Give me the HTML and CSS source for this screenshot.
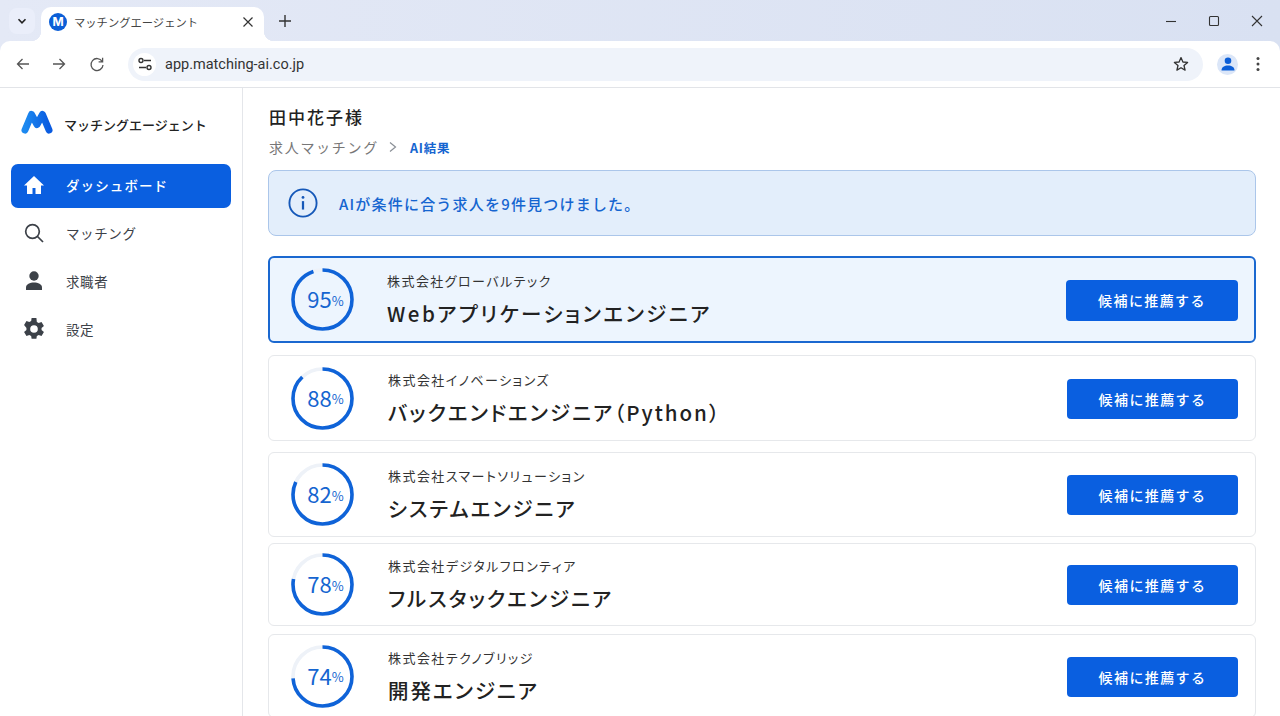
FILE: index.html
```html
<!DOCTYPE html>
<html lang="ja">
<head>
    <meta charset="UTF-8">
    <title>マッチングエージェント</title>
    <link rel="stylesheet" href="styles.css">
</head>
<body>
    <div class="window">
        <div class="tabstrip">
            <div class="tab-menu">
                <svg width="12" height="12" viewBox="0 0 12 12"><path d="M2.5 4.2 6 7.8l3.5-3.6" fill="none" stroke="#222" stroke-width="1.6"/></svg>
            </div>
            <div class="tab">
                <span class="favicon">M</span>
                <span class="tab-title">マッチングエージェント</span>
                <svg class="tab-close" width="12" height="12" viewBox="0 0 12 12"><path d="M1.5 1.5l9 9M10.5 1.5l-9 9" stroke="#333" stroke-width="1.2"/></svg>
            </div>
            <svg class="new-tab" width="14" height="14" viewBox="0 0 14 14"><path d="M7 1v12M1 7h12" stroke="#333" stroke-width="1.4"/></svg>
            <div class="win-controls">
                <svg width="12" height="12" viewBox="0 0 12 12"><path d="M1 6.5h10" stroke="#333" stroke-width="1.1"/></svg>
                <svg width="12" height="12" viewBox="0 0 12 12"><rect x="1.5" y="1.5" width="9" height="9" rx="1" fill="none" stroke="#333" stroke-width="1.1"/></svg>
                <svg width="12" height="12" viewBox="0 0 12 12"><path d="M1 1l10 10M11 1L1 11" stroke="#333" stroke-width="1.1"/></svg>
            </div>
        </div>

        <div class="toolbar">
            <svg class="tool-icon" width="16" height="16" viewBox="0 0 16 16"><path d="M14 8H2.500M7.500 3 2.500 8l5 5" fill="none" stroke="#555" stroke-width="1.300"/></svg>
            <svg class="tool-icon" width="16" height="16" viewBox="0 0 16 16"><path d="M2 8h11.500M8.500 3l5 5-5 5" fill="none" stroke="#555" stroke-width="1.300"/></svg>
            <svg class="tool-icon" width="16" height="16" viewBox="0 0 16 16"><path d="M13.200 5.500A6 6 0 1 0 14 9M13.600 1.800v4h-4" fill="none" stroke="#555" stroke-width="1.300"/></svg>
            <div class="omnibox">
                <span class="site-info">
                    <svg width="16" height="16" viewBox="0 0 16 16"><path d="M7 4.500h7M2 11.500h7" stroke="#333" stroke-width="1.400"/><circle cx="4" cy="4.500" r="2" fill="none" stroke="#333" stroke-width="1.400"/><circle cx="12" cy="11.500" r="2" fill="none" stroke="#333" stroke-width="1.400"/></svg>
                </span>
                <span class="url">app.matching-ai.co.jp</span>
                <svg class="star" width="16" height="16" viewBox="0 0 16 16"><path d="M8 1.600 9.900 6l4.700.4-3.600 3.100 1.100 4.600L8 11.700l-4.100 2.400 1.100-4.600L1.400 6.400 6.100 6z" fill="none" stroke="#333" stroke-width="1.300" stroke-linejoin="round"/></svg>
            </div>
            <span class="avatar">
                <svg width="16" height="16" viewBox="0 0 16 16"><circle cx="8" cy="4.800" r="3.300" fill="#0b5ed7"/><path d="M1.500 14.500c0-3.600 3-5 6.500-5s6.500 1.400 6.500 5z" fill="#0b5ed7"/></svg>
            </span>
            <svg class="kebab" width="4" height="16" viewBox="0 0 4 16"><circle cx="2" cy="2.500" r="1.500" fill="#444"/><circle cx="2" cy="8" r="1.500" fill="#444"/><circle cx="2" cy="13.500" r="1.500" fill="#444"/></svg>
        </div>

        <div class="app">
            <aside class="sidebar">
                <div class="brand">
                    <svg width="32" height="24" viewBox="0 0 32 24">
                        <defs>
                            <linearGradient id="logo" x1="0" y1="0" x2="1" y2="0">
                                <stop offset="0" stop-color="#1d8af0"/>
                                <stop offset="1" stop-color="#0a5be0"/>
                            </linearGradient>
                        </defs>
                        <path d="M4 20 10.500 4.500 16 14.500 21.500 4.500 28 20" fill="none" stroke="url(#logo)" stroke-width="7" stroke-linecap="round" stroke-linejoin="round"/>
                    </svg>
                    <span class="brand-name">マッチングエージェント</span>
                </div>
                <nav class="nav">
                    <a class="nav-item active">
                        <svg width="24" height="24" viewBox="0 0 24 24"><path d="M12 3 2 12.500h3V21h5.500v-6h3v6H19v-8.500h3z" fill="#fff"/></svg>
                        <span>ダッシュボード</span>
                    </a>
                    <a class="nav-item">
                        <svg width="24" height="24" viewBox="0 0 24 24"><circle cx="10.500" cy="10.500" r="6.800" fill="none" stroke="#3c4148" stroke-width="1.700"/><path d="M15.500 15.500 21 21" stroke="#3c4148" stroke-width="1.700"/></svg>
                        <span>マッチング</span>
                    </a>
                    <a class="nav-item">
                        <svg width="24" height="24" viewBox="0 0 24 24"><circle cx="12" cy="7" r="4.700" fill="#3c4148"/><path d="M4 21v-2.500C4 15 8 13.500 12 13.500s8 1.500 8 5V21z" fill="#3c4148"/></svg>
                        <span>求職者</span>
                    </a>
                    <a class="nav-item">
                        <svg width="24" height="24" viewBox="1.500 1 22 22"><path fill="#3c4148" fill-rule="evenodd" d="M19.400 13a7.500 7.500 0 0 0 0-2l2.200-1.700-2.200-3.700-2.600 1a7.500 7.500 0 0 0-1.700-1L14.700 2h-4.400l-.4 2.600a7.500 7.500 0 0 0-1.700 1l-2.600-1-2.200 3.700L5.600 11a7.500 7.500 0 0 0 0 2l-2.200 1.700 2.200 3.700 2.600-1a7.500 7.500 0 0 0 1.700 1l.4 2.600h4.400l.4-2.600a7.500 7.500 0 0 0 1.700-1l2.600 1 2.200-3.700zM12.500 15.500a3.500 3.500 0 1 1 0-7 3.500 3.500 0 0 1 0 7z"/></svg>
                        <span>設定</span>
                    </a>
                </nav>
            </aside>

            <main class="main">
                <h1 class="page-title">田中花子様</h1>
                <div class="breadcrumb">
                    <span>求人マッチング</span>
                    <svg width="10" height="12" viewBox="0 0 10 12"><path d="M2 1.500 7.500 6 2 10.500" fill="none" stroke="#8a8f96" stroke-width="1.200"/></svg>
                    <span class="crumb-current">AI結果</span>
                </div>

                <div class="notice">
                    <svg width="30" height="30" viewBox="0 0 32 32"><circle cx="16" cy="16" r="14.500" fill="none" stroke="#1558b8" stroke-width="2"/><circle cx="16" cy="10" r="1.500" fill="#1558b8"/><path d="M16 14v9" stroke="#1558b8" stroke-width="2.400"/></svg>
                    <span>AIが条件に合う求人を9件見つけました。</span>
                </div>

                <div class="card card-top">
                    <div class="score">
                        <svg width="63" height="63" viewBox="0 0 63 63"><circle class="track" cx="31.500" cy="31.500" r="29.500"/><circle class="arc" cx="31.500" cy="31.500" r="29.500" pathLength="100" stroke-dasharray="95 100"/></svg>
                        <span class="score-text">95<small>%</small></span>
                    </div>
                    <div class="job">
                        <div class="company">株式会社グローバルテック</div>
                        <div class="job-title">Webアプリケーションエンジニア</div>
                    </div>
                    <button class="recommend">候補に推薦する</button>
                </div>

                <div class="card card-2">
                    <div class="score">
                        <svg width="63" height="63" viewBox="0 0 63 63"><circle class="track" cx="31.500" cy="31.500" r="29.500"/><circle class="arc" cx="31.500" cy="31.500" r="29.500" pathLength="100" stroke-dasharray="88 100"/></svg>
                        <span class="score-text">88<small>%</small></span>
                    </div>
                    <div class="job">
                        <div class="company">株式会社イノベーションズ</div>
                        <div class="job-title">バックエンドエンジニア（Python）</div>
                    </div>
                    <button class="recommend">候補に推薦する</button>
                </div>

                <div class="card card-3">
                    <div class="score">
                        <svg width="63" height="63" viewBox="0 0 63 63"><circle class="track" cx="31.500" cy="31.500" r="29.500"/><circle class="arc" cx="31.500" cy="31.500" r="29.500" pathLength="100" stroke-dasharray="82 100"/></svg>
                        <span class="score-text">82<small>%</small></span>
                    </div>
                    <div class="job">
                        <div class="company">株式会社スマートソリューション</div>
                        <div class="job-title">システムエンジニア</div>
                    </div>
                    <button class="recommend">候補に推薦する</button>
                </div>

                <div class="card card-4">
                    <div class="score">
                        <svg width="63" height="63" viewBox="0 0 63 63"><circle class="track" cx="31.500" cy="31.500" r="29.500"/><circle class="arc" cx="31.500" cy="31.500" r="29.500" pathLength="100" stroke-dasharray="78 100"/></svg>
                        <span class="score-text">78<small>%</small></span>
                    </div>
                    <div class="job">
                        <div class="company">株式会社デジタルフロンティア</div>
                        <div class="job-title">フルスタックエンジニア</div>
                    </div>
                    <button class="recommend">候補に推薦する</button>
                </div>

                <div class="card card-5">
                    <div class="score">
                        <svg width="63" height="63" viewBox="0 0 63 63"><circle class="track" cx="31.500" cy="31.500" r="29.500"/><circle class="arc" cx="31.500" cy="31.500" r="29.500" pathLength="100" stroke-dasharray="74 100"/></svg>
                        <span class="score-text">74<small>%</small></span>
                    </div>
                    <div class="job">
                        <div class="company">株式会社テクノブリッジ</div>
                        <div class="job-title">開発エンジニア</div>
                    </div>
                    <button class="recommend">候補に推薦する</button>
                </div>
            </main>
        </div>
    </div>
</body>
</html>
```

FILE: styles.css
```css
* {
    box-sizing: border-box;
}
html, body {
    margin: 0;
    height: 716px;
    overflow: hidden;
}
body {
    font-family: "Noto Sans CJK JP", "Noto Sans", sans-serif;
    color: #222;
    background: #fff;
}
.window {
    height: 716px;
    display: flex;
    flex-direction: column;
    background: linear-gradient(90deg, #e4e9f6, #d9e1f2);
}

/* browser tabs */
.tabstrip {
    height: 41px;
    flex: none;
    display: flex;
    align-items: flex-end;
    padding-left: 9px;
}
.tab-menu {
    width: 26px;
    height: 26px;
    margin-bottom: 7px;
    border-radius: 8px;
    background: #eaeefa;
    display: flex;
    align-items: center;
    justify-content: center;
}
.tab {
    position: relative;
    width: 223px;
    height: 34px;
    margin-left: 6px;
    padding: 0 10px 4px 8px;
    background: #fff;
    border-radius: 10px 10px 0 0;
    display: flex;
    align-items: center;
}
.tab::before,
.tab::after {
    content: "";
    position: absolute;
    bottom: 0;
    width: 10px;
    height: 10px;
}
.tab::before {
    left: -10px;
    background: radial-gradient(circle at 0 0, transparent 10px, #fff 10.5px);
}
.tab::after {
    right: -10px;
    background: radial-gradient(circle at 100% 0, transparent 10px, #fff 10.5px);
}
.favicon {
    width: 18px;
    height: 18px;
    border-radius: 50%;
    background: #0b5ed7;
    color: #fff;
    font-family: "Inter", sans-serif;
    font-size: 12px;
    font-weight: 700;
    line-height: 18px;
    text-align: center;
    flex: none;
}
.tab-title {
    margin-left: 7px;
    font-size: 11.3px;
    color: #444;
    white-space: nowrap;
}
.tab-close {
    margin-left: auto;
}
.new-tab {
    margin: 0 0 13px 14px;
}
.win-controls {
    margin-left: auto;
    margin-bottom: 14px;
    padding-right: 17px;
    display: flex;
    gap: 31px;
}

/* address bar */
.toolbar {
    height: 47px;
    flex: none;
    background: #fff;
    border-radius: 10px 10px 0 0;
    border-bottom: 1px solid #e2e4e8;
    display: flex;
    align-items: center;
    padding: 0 20px 0 15px;
}
.tool-icon {
    margin-right: 20px;
    flex: none;
}
.tool-icon:nth-child(2) {
    margin-right: 22px;
}
.tool-icon:nth-child(3) {
    margin-right: 23px;
}
.omnibox {
    width: 1075px;
    height: 33px;
    border-radius: 17px;
    background: #eff3fa;
    display: flex;
    align-items: center;
    padding: 0 14px 0 5px;
}
.site-info {
    width: 23px;
    height: 23px;
    border-radius: 50%;
    background: #fff;
    display: flex;
    align-items: center;
    justify-content: center;
}
.url {
    margin-left: 9px;
    font-family: "Roboto", sans-serif;
    font-size: 14.5px;
    color: #333;
}
.star {
    margin-left: auto;
}
.avatar {
    width: 21px;
    height: 21px;
    margin-left: 14px;
    border-radius: 50%;
    background: #dbe6f8;
    display: flex;
    align-items: center;
    justify-content: center;
}
.kebab {
    margin-left: 18px;
}

/* page */
.app {
    flex: 1;
    min-height: 0;
    display: flex;
    background: #fff;
}
.sidebar {
    width: 243px;
    flex: none;
    border-right: 1px solid #e4e6ea;
    padding: 0 11px;
}
.brand {
    height: 70px;
    margin-bottom: 6px;
    padding-left: 10px;
    display: flex;
    align-items: center;
    gap: 11px;
}
.brand svg {
    margin-top: -2px;
}
.brand-name {
    margin-top: 2px;
    font-size: 13px;
    font-weight: 500;
    color: #222;
}
.nav {
    display: flex;
    flex-direction: column;
    gap: 4px;
}
.nav-item {
    width: 220px;
    height: 44px;
    border-radius: 7px;
    padding: 0 0 2px 11px;
    display: flex;
    align-items: center;
    gap: 20px;
    font-size: 13.500px;
    letter-spacing: 0.6px;
    color: #3c4148;
}
.nav-item.active {
    background: #0a5fe0;
    color: #fff;
    font-weight: 500;
    letter-spacing: 1.100px;
}
.main {
    flex: 1;
    min-width: 0;
    padding: 16px 24px 0 25px;
}
.page-title {
    margin: 0 0 0 1px;
    font-size: 17px;
    line-height: 26px;
    font-weight: 500;
    letter-spacing: 2px;
    color: #222;
}
.breadcrumb {
    margin: 5px 0 0 1px;
    height: 24px;
    display: flex;
    align-items: center;
    font-size: 14px;
    letter-spacing: 1.700px;
    color: #777;
}
.breadcrumb svg {
    margin: 0 12px 0 9px;
}
.crumb-current {
    font-size: 12.500px;
    font-weight: 700;
    letter-spacing: 0.8px;
    color: #1565d0;
}
.notice {
    height: 66px;
    margin-top: 11px;
    padding-left: 19px;
    border: 1px solid #abc6ea;
    border-radius: 8px;
    background: #e3eefb;
    display: flex;
    align-items: center;
    gap: 21px;
    font-size: 15px;
    font-weight: 500;
    letter-spacing: 1.200px;
    color: #1565d0;
}
.notice span {
    margin-top: 1px;
}

/* job cards */
.card {
    padding: 0 17px 0 22px;
    border: 1px solid #e6e8eb;
    border-radius: 6px;
    background: #fff;
    display: flex;
    align-items: center;
}
.card-top {
    height: 87px;
    margin-top: 20px;
    border: 2px solid #1a68d0;
    padding: 0 16px 0 21px;
    background: #edf5fe;
}
.card-2 {
    height: 86px;
    margin-top: 12px;
}
.card-3 {
    height: 85px;
    margin-top: 11px;
}
.card-4 {
    height: 83px;
    margin-top: 6px;
}
.card-5 {
    height: 84px;
    margin-top: 8px;
}
.score {
    position: relative;
    width: 63px;
    height: 63px;
    flex: none;
}
.score svg {
    display: block;
    transform: rotate(-90deg);
}
.track,
.arc {
    fill: none;
    stroke-width: 3.600;
}
.track {
    stroke: #eef2f8;
}
.arc {
    stroke: #0f63d8;
}
.score-text {
    position: absolute;
    inset: 0;
    padding: 0 0 3px 6px;
    display: flex;
    align-items: center;
    justify-content: center;
    font-size: 22px;
    color: #1565d0;
}
.score-text small {
    margin-top: 4px;
    font-size: 13px;
}
.job {
    margin-left: 34px;
    flex: 1;
    min-width: 0;
}
.card-top .job {
    margin-left: 33px;
}
.company {
    font-size: 13px;
    line-height: 20px;
    letter-spacing: 1.450px;
    font-feature-settings: "palt";
    color: #333;
}
.job-title {
    margin-top: 7px;
    font-size: 20.500px;
    line-height: 30px;
    font-weight: 500;
    letter-spacing: 2px;
    font-feature-settings: "palt";
    color: #222;
}
.card-top .job-title {
    letter-spacing: 2.500px;
}
.recommend {
    width: 171px;
    height: 40px;
    margin-top: 1px;
    flex: none;
    border: none;
    border-radius: 4px;
    background: #0a5fe0;
    color: #fff;
    font-family: inherit;
    font-size: 14px;
    font-weight: 500;
    letter-spacing: 1.400px;
}
.card-top .recommend {
    width: 172px;
    height: 41px;
}
```
